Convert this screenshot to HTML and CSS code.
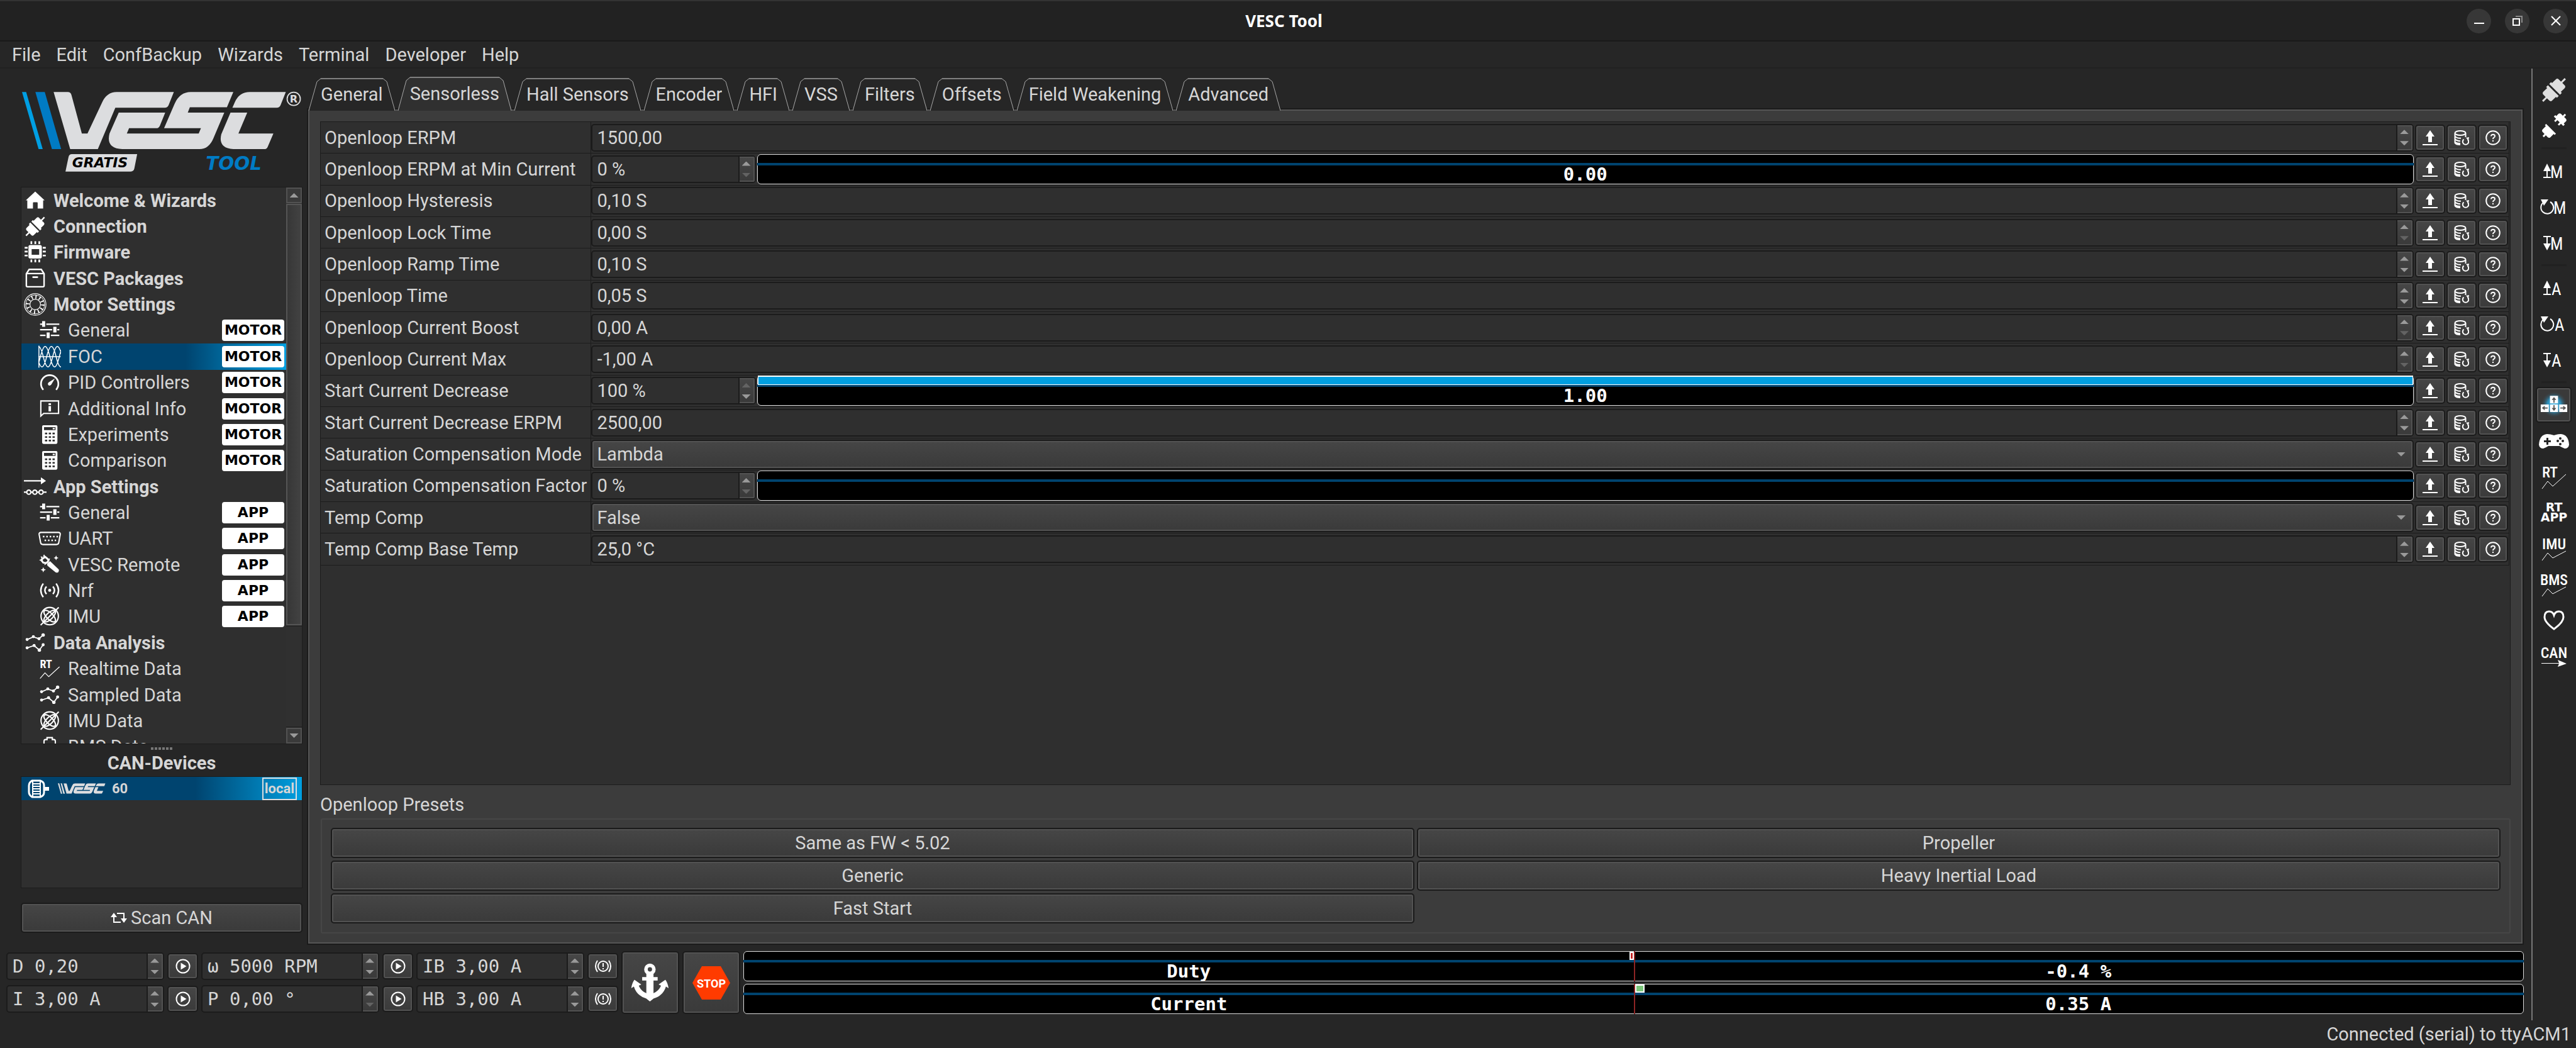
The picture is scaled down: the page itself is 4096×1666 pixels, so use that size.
FILE: index.html
```html
<!DOCTYPE html>
<html lang="en">
<head>
<meta charset="utf-8">
<title>VESC Tool</title>
<link rel="stylesheet" href="styles.css">
</head>
<body>
<svg class="defs" aria-hidden="true">
  <symbol id="i-home" viewBox="0 0 120 120"><path d="M60 12L110 58H102V102H73V72Q73 68 69 68H52Q48 68 48 72V102H18V58H10Z"/></symbol>
  <symbol id="i-plug" viewBox="0 0 120 120"><g id="half" transform="rotate(45 60 60)"><path d="M56-9h8v22h14q8 0 9 8v24h6v11H27V45h6V21q1-8 9-8h14z"/></g><use href="#half" transform="rotate(180 60 60)"/></symbol>
  <symbol id="i-unplug" viewBox="0 0 120 120"><g transform="rotate(45 60 60)"><path d="M56-10h8V2h10q8 0 9 7v14h6v9H75v12h-8V32H53v12h-8V32H31v-9h6V9q1-7 9-7h10z"/><path d="M30 78h60v8h-6v20q-1 8-9 8H64v12h-8v-12H45q-8 0-9-8V86h-6z"/></g></symbol>
  <symbol id="i-chip" viewBox="0 0 120 120"><path fill-rule="evenodd" d="M34 22H85Q95 22 95 32V83Q95 93 85 93H34Q24 93 24 83V32Q24 22 34 22ZM41 43V73H81V43Z"/><path d="M35 2h9v15h-9zM56 2h9v15h-9zM77 2h9v15h-9zM35 98h9v15h-9zM56 98h9v15h-9zM77 98h9v15h-9zM4 32h16v9H4zM4 52h16v9H4zM4 73h16v9H4zM100 32h16v9h-16zM100 52h16v9h-16zM100 73h16v9h-16z"/></symbol>
  <symbol id="i-box" viewBox="0 0 120 120"><path class="ln" stroke-width="8" d="M13 34L28 11H92L107 34V97Q107 103 101 103H19Q13 103 13 97ZM13 33H107"/><path class="ln" stroke-width="9" stroke-linecap="round" d="M49 52H71"/></symbol>
  <symbol id="i-motor" viewBox="0 0 120 120"><g class="ln" stroke-width="4"><circle cx="60" cy="60" r="57"/><circle cx="60" cy="60" r="50" stroke-width="3"/><circle cx="60" cy="60" r="28"/><circle cx="60" cy="60" r="40" stroke-width="20" stroke-dasharray="6 14.940"/></g></symbol>
  <symbol id="i-sliders" viewBox="0 0 120 120"><path d="M9 24h11V12h16v30H20V32H9zM42 24h69v8H42zM9 53h64v8H9zM79 42h17v30H79zM100 53h11v8h-11zM9 83h29v8H9zM44 72h16v30H44zM66 83h45v8H66z"/></symbol>
  <symbol id="i-foc" viewBox="0 0 120 120"><path class="ln" stroke-width="5" d="M3 2V118M0 60H118M-39 60c18 72 32 72 50 0c18-72 32-72 50 0c18 72 32 72 50 0c18-72 32-72 50 0M-6 60c18 72 32 72 50 0c18-72 32-72 50 0c18 72 32 72 50 0M-24 60c18-72 32-72 50 0c18 72 32 72 50 0c18-72 32-72 50 0"/></symbol>
  <symbol id="i-gauge" viewBox="0 0 120 120"><path class="ln" stroke-width="9" stroke-linecap="round" d="M24 96A46 46 0 1 1 96 96"/><path d="M88 38L68 72Q60 80 52 73Q48 66 54 60Z"/></symbol>
  <symbol id="i-info" viewBox="0 0 120 120"><path class="ln" stroke-width="7" d="M13 98V18H107V84H28Z"/><path d="M54 30h13v10H54zM54 45h13v28H54z"/></symbol>
  <symbol id="i-calc" viewBox="0 0 120 120"><path fill-rule="evenodd" d="M27 10H94Q101 10 101 17V102Q101 109 94 109H27Q20 109 20 102V17Q20 10 27 10ZM30 20V36H91V20ZM76 24H87V32H76ZM35 49v9h12v-9zM55 49v9h12v-9zM75 49v9h12v-9zM35 68v9h12v-9zM55 68v9h12v-9zM75 68v9h12v-9zM35 87v9h12v-9zM55 87v9h12v-9zM75 87v9h12v-9z"/></symbol>
  <symbol id="i-app" viewBox="0 0 120 120"><path d="M0 24H90V9L117 28L90 47V32H0z"/><g class="ln" stroke-width="7"><path d="M0 88H13M38 88H46M70 88H78M104 88H120"/><circle cx="26" cy="88" r="11"/><circle cx="58" cy="88" r="11"/><circle cx="91" cy="88" r="11"/></g></symbol>
  <symbol id="i-uart" viewBox="0 0 120 120"><path class="ln" stroke-width="7" d="M14 28H106Q117 28 116 38L108 82Q106 92 96 92H24Q14 92 12 82L4 38Q3 28 14 28Z"/><path class="ln" stroke-width="8" stroke-dasharray="8 10" d="M24 50H104M33 70H94"/></symbol>
  <symbol id="i-wand" viewBox="0 0 120 120"><path class="ln" stroke-width="10" d="M20 28L36 18L44 24L54 34L50 44L40 50L26 48L18 38Z"/><path d="M30 4l8 12H24zM4 34l14-6v14zM62 26l-12 2 8 10zM32 62l2-14 10 6zM12 14l12 4-8 8z"/><path d="M46 54L62 40L108 84Q112 92 106 98Q98 104 90 98L48 64zM94 10l4 9 9 4-9 4-4 9-4-9-9-4 9-4zM26 72l4 10 10 4-10 4-4 10-4-10-10-4 10-4z"/></symbol>
  <symbol id="i-nrf" viewBox="0 0 120 120"><circle cx="60" cy="58" r="8"/><path class="ln" stroke-width="8" d="M43 38Q26 58 43 78M77 38Q94 58 77 78M26 22Q0 58 26 94M94 22Q120 58 94 94"/></symbol>
  <symbol id="i-imu" viewBox="0 0 120 120"><g class="ln" stroke-width="7"><circle cx="60" cy="58" r="46"/><path d="M12 106L108 12"/><ellipse cx="60" cy="58" rx="40" ry="17" transform="rotate(45 60 58)"/><ellipse cx="60" cy="58" rx="40" ry="17" transform="rotate(-45 60 58)"/></g></symbol>
  <symbol id="i-data" viewBox="0 0 120 120"><path class="ln" stroke-width="6" d="M18 42L50 28L80 38L102 18M18 86L54 74L82 98L102 70"/><circle cx="17" cy="42" r="8"/><circle cx="50" cy="27" r="8"/><circle cx="80" cy="38" r="8"/><circle cx="102" cy="18" r="9"/><circle cx="17" cy="86" r="8"/><circle cx="54" cy="74" r="8"/><circle cx="82" cy="98" r="9"/><circle cx="102" cy="70" r="8"/></symbol>
  <symbol id="i-batt" viewBox="0 0 120 120"><path class="ln" stroke-width="7" d="M46 22V12H74V22H82Q90 22 90 32V112H30V32Q30 22 38 22Z"/></symbol>
  <symbol id="i-trend" viewBox="0 0 120 120"><path class="ln" stroke-width="4" d="M9 112L35 82L55 102L112 50"/></symbol>
  <symbol id="i-upload" viewBox="0 0 24 24"><path d="M12 0L19 10H15V19H9V10H5ZM0 22h24v2H0z"/></symbol>
  <symbol id="i-db" viewBox="0 0 24 24"><g class="ln" stroke-width="2"><ellipse cx="10" cy="4.500" rx="8.500" ry="3.500"/><path d="M1.500 5V20Q3 23 10 23M18.500 5V11M1.500 9.500Q4 13 11 12.800M1.500 14Q4 17 10 17.300M1.500 18.500Q4 21 10 21"/><path d="M15.500 14.500A4.700 4.700 0 1 0 21.500 14.500"/></g><path d="M19 12l5-1-1 5z"/></symbol>
  <symbol id="i-help" viewBox="0 0 24 24"><circle class="ln" cx="12" cy="12" r="10.800" stroke-width="2"/><path class="ln" stroke-width="2" d="M9 9.500Q9.200 6.800 12 6.800Q15 6.800 15 9.300Q15 11 13.200 11.900Q12 12.500 12 14.300"/><path d="M11 16h2v2h-2z"/></symbol>
  <symbol id="i-play" viewBox="0 0 24 24"><circle class="ln" cx="12" cy="12" r="10.500" stroke-width="2"/><path d="M8.500 6.500L17.500 12L8.500 17.500Z"/></symbol>
  <symbol id="i-brake" viewBox="0 0 28 24"><circle class="ln" cx="14" cy="12" r="8" stroke-width="2"/><path class="ln" stroke-width="2" d="M5 3Q-1 12 5 21M23 3Q29 12 23 21"/><path d="M13 7h2v6h-2zM13 15h2v2h-2z"/></symbol>
  <symbol id="t-left" viewBox="0 0 20 54" preserveAspectRatio="none"><path class="tab-fill" d="M0 54L14 5L20 0V54Z"/><path class="tab-line" d="M1 54L14 6L20 1"/></symbol>
  <symbol id="t-right" viewBox="0 0 20 54" preserveAspectRatio="none"><path class="tab-fill" d="M20 54L6 5L0 0V54Z"/><path class="tab-line" d="M19 54L6 6L0 1"/></symbol>
  <symbol id="i-vesc" viewBox="27 62 1484 310"><path d="M195 66H270Q286 66 290 82L345 286H375L452 122Q478 66 530 66H834L806 136Q800 149 786 149H523L430 369H283ZM541 175H788L760 244Q754 258 740 258H596L584 286H966L978 258H782L838 128Q866 66 924 66H1150L1116 147H919L908 175H1102L1044 312Q1020 369 970 369H560Q472 366 492 286ZM1145 149L1158 120Q1182 66 1238 66H1429L1401 136Q1395 149 1381 149ZM1135 175H1224L1177 286H1363L1333 356Q1328 369 1314 369H1150Q1068 364 1086 290Z"/></symbol>
</svg>

<header class="titlebar">
  <h1>VESC Tool</h1>
  <div class="winbtns">
    <button type="button" aria-label="Minimize"><svg width="18" height="18" viewBox="0 0 18 18"><path d="M1 12h16v2H1z"/></svg></button>
    <button type="button" aria-label="Restore"><svg width="18" height="18" viewBox="0 0 18 18"><path class="ln" stroke-width="2" d="M2 6h10v10H2z"/><path class="ln dim" stroke-width="2" d="M6 2h10v10"/></svg></button>
    <button type="button" aria-label="Close"><svg width="18" height="18" viewBox="0 0 18 18"><path class="ln" stroke-width="2" d="M2 2L16 16M16 2L2 16"/></svg></button>
  </div>
</header>
<nav class="menubar">
  <a href="#">File</a><a href="#">Edit</a><a href="#">ConfBackup</a><a href="#">Wizards</a><a href="#">Terminal</a><a href="#">Developer</a><a href="#">Help</a>
</nav>

<div class="workspace">
  <main class="main">
    <div class="upper">
      <aside class="sidebar">
        <svg class="logo" viewBox="27 62 1484 430" role="img" aria-label="VESC Tool">
          <path fill="#009fe3" d="M27 66H49L137 369H115Z"/>
          <path fill="#007bc4" d="M98 66H148L235 369H186Z"/>
          <use href="#i-vesc" x="27" y="62" width="1484" height="310" fill="#dcdddf"/>
          <circle cx="1471" cy="102" r="35" fill="none" stroke="#dcdddf" stroke-width="6"/>
          <text class="reg" x="1471" y="121" text-anchor="middle">R</text>
          <path fill="#dcdddf" d="M292 396H639L624 472Q621 488 605 488H258L274 412Q277 396 292 396Z"/>
          <text class="gratis" x="294" y="467">GRATIS</text>
          <text class="tool-word" x="1004" y="479">TOOL</text>
        </svg>
        <div class="tree">
          <ul>
            <li class="top"><svg><use href="#i-home"/></svg><span>Welcome &amp; Wizards</span></li>
            <li class="top"><svg><use href="#i-plug"/></svg><span>Connection</span></li>
            <li class="top"><svg><use href="#i-chip"/></svg><span>Firmware</span></li>
            <li class="top"><svg><use href="#i-box"/></svg><span>VESC Packages</span></li>
            <li class="top"><svg><use href="#i-motor"/></svg><span>Motor Settings</span></li>
            <li><svg><use href="#i-sliders"/></svg><span>General</span><b>MOTOR</b></li>
            <li class="sel"><svg><use href="#i-foc"/></svg><span>FOC</span><b>MOTOR</b></li>
            <li><svg><use href="#i-gauge"/></svg><span>PID Controllers</span><b>MOTOR</b></li>
            <li><svg><use href="#i-info"/></svg><span>Additional Info</span><b>MOTOR</b></li>
            <li><svg><use href="#i-calc"/></svg><span>Experiments</span><b>MOTOR</b></li>
            <li><svg><use href="#i-calc"/></svg><span>Comparison</span><b>MOTOR</b></li>
            <li class="top"><svg><use href="#i-app"/></svg><span>App Settings</span></li>
            <li><svg><use href="#i-sliders"/></svg><span>General</span><b>APP</b></li>
            <li><svg><use href="#i-uart"/></svg><span>UART</span><b>APP</b></li>
            <li><svg><use href="#i-wand"/></svg><span>VESC Remote</span><b>APP</b></li>
            <li><svg><use href="#i-nrf"/></svg><span>Nrf</span><b>APP</b></li>
            <li><svg><use href="#i-imu"/></svg><span>IMU</span><b>APP</b></li>
            <li class="top"><svg><use href="#i-data"/></svg><span>Data Analysis</span></li>
            <li><svg viewBox="0 0 120 120"><text class="lbl-rt" x="8" y="58">RT</text><use href="#i-trend"/></svg><span>Realtime Data</span></li>
            <li><svg><use href="#i-data"/></svg><span>Sampled Data</span></li>
            <li><svg><use href="#i-imu"/></svg><span>IMU Data</span></li>
            <li><svg><use href="#i-batt"/></svg><span>BMS Data</span></li>
          </ul>
          <div class="scroll"><button type="button" class="sbtn" aria-label="Scroll up"><i class="up"></i></button><div class="thumb"></div><div class="track"></div><button type="button" class="sbtn" aria-label="Scroll down"><i class="down"></i></button></div>
        </div>
        <div class="grip"></div>
        <h2>CAN-Devices</h2>
        <div class="canlist">
          <div class="candev">
            <svg class="mot" viewBox="0 0 36 30"><path class="ln" stroke-width="3" d="M7 2H20Q26 4 26 9V21Q26 26 20 28H7Q2 25 2 20V10Q2 5 7 2Z"/><path class="ln" stroke-width="2" d="M8 3V27M20 3V27M8 7H20M8 11H20M8 15H20M8 19H20M8 23H20"/><path d="M27 12h7v6h-7z"/></svg>
            <svg class="mini" viewBox="27 62 1484 310"><path d="M27 66H69L157 369H115ZM108 66H148L235 369H186Z"/><use href="#i-vesc" x="27" y="62" width="1484" height="310"/></svg>
            <span>60</span><em>local</em>
          </div>
        </div>
        <button type="button" class="btn scan"><svg width="26" height="22" viewBox="0 0 26 22"><path class="ln" stroke-width="2" d="M16 18H5V7M10 4H21V15"/><path d="M5 3l5 7H0zM21 19l5-7H16z"/></svg>Scan CAN</button>
      </aside>

      <section class="content">
        <div class="tabs" role="tablist">
          <button type="button" class="tab" role="tab"><svg><use href="#t-left"/></svg><span>General</span><svg><use href="#t-right"/></svg></button>
          <button type="button" class="tab on" role="tab" aria-selected="true"><svg><use href="#t-left"/></svg><span>Sensorless</span><svg><use href="#t-right"/></svg></button>
          <button type="button" class="tab" role="tab"><svg><use href="#t-left"/></svg><span>Hall Sensors</span><svg><use href="#t-right"/></svg></button>
          <button type="button" class="tab" role="tab"><svg><use href="#t-left"/></svg><span>Encoder</span><svg><use href="#t-right"/></svg></button>
          <button type="button" class="tab" role="tab"><svg><use href="#t-left"/></svg><span>HFI</span><svg><use href="#t-right"/></svg></button>
          <button type="button" class="tab" role="tab"><svg><use href="#t-left"/></svg><span>VSS</span><svg><use href="#t-right"/></svg></button>
          <button type="button" class="tab" role="tab"><svg><use href="#t-left"/></svg><span>Filters</span><svg><use href="#t-right"/></svg></button>
          <button type="button" class="tab" role="tab"><svg><use href="#t-left"/></svg><span>Offsets</span><svg><use href="#t-right"/></svg></button>
          <button type="button" class="tab" role="tab"><svg><use href="#t-left"/></svg><span>Field Weakening</span><svg><use href="#t-right"/></svg></button>
          <button type="button" class="tab" role="tab"><svg><use href="#t-left"/></svg><span>Advanced</span><svg><use href="#t-right"/></svg></button>
        </div>
        <div class="pane">
          <div class="frame">
            <table class="params">
              <tr><th scope="row"><label for="p1">Openloop ERPM</label></th><td><div class="field"><span class="spin"><input id="p1" value="1500,00"><span class="arrows"><i class="up"></i><i class="down"></i></span></span><button type="button" class="btn sq" aria-label="Read current"><svg><use href="#i-upload"/></svg></button><button type="button" class="btn sq" aria-label="Read default"><svg><use href="#i-db"/></svg></button><button type="button" class="btn sq" aria-label="Help"><svg><use href="#i-help"/></svg></button></div></td></tr>
              <tr><th scope="row"><label for="p2">Openloop ERPM at Min Current</label></th><td><div class="field"><span class="spin pct"><input id="p2" value="0 %"><span class="arrows"><i class="up"></i><i class="down off"></i></span></span><div class="meter"><span>0.00</span></div><button type="button" class="btn sq" aria-label="Read current"><svg><use href="#i-upload"/></svg></button><button type="button" class="btn sq" aria-label="Read default"><svg><use href="#i-db"/></svg></button><button type="button" class="btn sq" aria-label="Help"><svg><use href="#i-help"/></svg></button></div></td></tr>
              <tr><th scope="row"><label for="p3">Openloop Hysteresis</label></th><td><div class="field"><span class="spin"><input id="p3" value="0,10 S"><span class="arrows"><i class="up"></i><i class="down"></i></span></span><button type="button" class="btn sq" aria-label="Read current"><svg><use href="#i-upload"/></svg></button><button type="button" class="btn sq" aria-label="Read default"><svg><use href="#i-db"/></svg></button><button type="button" class="btn sq" aria-label="Help"><svg><use href="#i-help"/></svg></button></div></td></tr>
              <tr><th scope="row"><label for="p4">Openloop Lock Time</label></th><td><div class="field"><span class="spin"><input id="p4" value="0,00 S"><span class="arrows"><i class="up"></i><i class="down off"></i></span></span><button type="button" class="btn sq" aria-label="Read current"><svg><use href="#i-upload"/></svg></button><button type="button" class="btn sq" aria-label="Read default"><svg><use href="#i-db"/></svg></button><button type="button" class="btn sq" aria-label="Help"><svg><use href="#i-help"/></svg></button></div></td></tr>
              <tr><th scope="row"><label for="p5">Openloop Ramp Time</label></th><td><div class="field"><span class="spin"><input id="p5" value="0,10 S"><span class="arrows"><i class="up"></i><i class="down"></i></span></span><button type="button" class="btn sq" aria-label="Read current"><svg><use href="#i-upload"/></svg></button><button type="button" class="btn sq" aria-label="Read default"><svg><use href="#i-db"/></svg></button><button type="button" class="btn sq" aria-label="Help"><svg><use href="#i-help"/></svg></button></div></td></tr>
              <tr><th scope="row"><label for="p6">Openloop Time</label></th><td><div class="field"><span class="spin"><input id="p6" value="0,05 S"><span class="arrows"><i class="up"></i><i class="down"></i></span></span><button type="button" class="btn sq" aria-label="Read current"><svg><use href="#i-upload"/></svg></button><button type="button" class="btn sq" aria-label="Read default"><svg><use href="#i-db"/></svg></button><button type="button" class="btn sq" aria-label="Help"><svg><use href="#i-help"/></svg></button></div></td></tr>
              <tr><th scope="row"><label for="p7">Openloop Current Boost</label></th><td><div class="field"><span class="spin"><input id="p7" value="0,00 A"><span class="arrows"><i class="up"></i><i class="down off"></i></span></span><button type="button" class="btn sq" aria-label="Read current"><svg><use href="#i-upload"/></svg></button><button type="button" class="btn sq" aria-label="Read default"><svg><use href="#i-db"/></svg></button><button type="button" class="btn sq" aria-label="Help"><svg><use href="#i-help"/></svg></button></div></td></tr>
              <tr><th scope="row"><label for="p8">Openloop Current Max</label></th><td><div class="field"><span class="spin"><input id="p8" value="-1,00 A"><span class="arrows"><i class="up"></i><i class="down off"></i></span></span><button type="button" class="btn sq" aria-label="Read current"><svg><use href="#i-upload"/></svg></button><button type="button" class="btn sq" aria-label="Read default"><svg><use href="#i-db"/></svg></button><button type="button" class="btn sq" aria-label="Help"><svg><use href="#i-help"/></svg></button></div></td></tr>
              <tr><th scope="row"><label for="p9">Start Current Decrease</label></th><td><div class="field"><span class="spin pct"><input id="p9" value="100 %"><span class="arrows"><i class="up off"></i><i class="down"></i></span></span><div class="meter"><div class="fill" style="width:100%"></div><span>1.00</span></div><button type="button" class="btn sq" aria-label="Read current"><svg><use href="#i-upload"/></svg></button><button type="button" class="btn sq" aria-label="Read default"><svg><use href="#i-db"/></svg></button><button type="button" class="btn sq" aria-label="Help"><svg><use href="#i-help"/></svg></button></div></td></tr>
              <tr><th scope="row"><label for="p10">Start Current Decrease ERPM</label></th><td><div class="field"><span class="spin"><input id="p10" value="2500,00"><span class="arrows"><i class="up"></i><i class="down"></i></span></span><button type="button" class="btn sq" aria-label="Read current"><svg><use href="#i-upload"/></svg></button><button type="button" class="btn sq" aria-label="Read default"><svg><use href="#i-db"/></svg></button><button type="button" class="btn sq" aria-label="Help"><svg><use href="#i-help"/></svg></button></div></td></tr>
              <tr><th scope="row"><label for="p11">Saturation Compensation Mode</label></th><td><div class="field"><span class="combo"><select id="p11"><option>Lambda</option></select><i class="down"></i></span><button type="button" class="btn sq" aria-label="Read current"><svg><use href="#i-upload"/></svg></button><button type="button" class="btn sq" aria-label="Read default"><svg><use href="#i-db"/></svg></button><button type="button" class="btn sq" aria-label="Help"><svg><use href="#i-help"/></svg></button></div></td></tr>
              <tr><th scope="row"><label for="p12">Saturation Compensation Factor</label></th><td><div class="field"><span class="spin pct"><input id="p12" value="0 %"><span class="arrows"><i class="up"></i><i class="down off"></i></span></span><div class="meter"></div><button type="button" class="btn sq" aria-label="Read current"><svg><use href="#i-upload"/></svg></button><button type="button" class="btn sq" aria-label="Read default"><svg><use href="#i-db"/></svg></button><button type="button" class="btn sq" aria-label="Help"><svg><use href="#i-help"/></svg></button></div></td></tr>
              <tr><th scope="row"><label for="p13">Temp Comp</label></th><td><div class="field"><span class="combo"><select id="p13"><option>False</option></select><i class="down"></i></span><button type="button" class="btn sq" aria-label="Read current"><svg><use href="#i-upload"/></svg></button><button type="button" class="btn sq" aria-label="Read default"><svg><use href="#i-db"/></svg></button><button type="button" class="btn sq" aria-label="Help"><svg><use href="#i-help"/></svg></button></div></td></tr>
              <tr><th scope="row"><label for="p14">Temp Comp Base Temp</label></th><td><div class="field"><span class="spin"><input id="p14" value="25,0 °C"><span class="arrows"><i class="up"></i><i class="down"></i></span></span><button type="button" class="btn sq" aria-label="Read current"><svg><use href="#i-upload"/></svg></button><button type="button" class="btn sq" aria-label="Read default"><svg><use href="#i-db"/></svg></button><button type="button" class="btn sq" aria-label="Help"><svg><use href="#i-help"/></svg></button></div></td></tr>
            </table>
          </div>
          <h3>Openloop Presets</h3>
          <div class="presets">
            <button type="button" class="btn">Same as FW &lt; 5.02</button>
            <button type="button" class="btn">Propeller</button>
            <button type="button" class="btn">Generic</button>
            <button type="button" class="btn">Heavy Inertial Load</button>
            <button type="button" class="btn">Fast Start</button>
          </div>
        </div>
      </section>
    </div>

    <div class="controls">
      <span class="spin mono"><input aria-label="Duty" value="D 0,20"><span class="arrows"><i class="up"></i><i class="down"></i></span></span>
      <button type="button" class="btn sq" aria-label="Run duty"><svg><use href="#i-play"/></svg></button>
      <span class="spin mono"><input aria-label="Speed" value="ω 5000 RPM"><span class="arrows"><i class="up"></i><i class="down"></i></span></span>
      <button type="button" class="btn sq" aria-label="Run speed"><svg><use href="#i-play"/></svg></button>
      <span class="spin mono"><input aria-label="Brake current" value="IB 3,00 A"><span class="arrows"><i class="up"></i><i class="down"></i></span></span>
      <button type="button" class="btn sq brake" aria-label="Brake"><svg><use href="#i-brake"/></svg></button>
      <button type="button" class="btn big" aria-label="Full brake"><svg width="60" height="60" viewBox="0 0 200 200"><circle class="ln" cx="98" cy="30" r="21" stroke-width="19"/><path d="M79 46H117V160H79zM57 71h82v18H57z"/><path d="M16 85L52 110L39 117Q52 146 80 157H116Q144 146 157 117L144 110L180 85Q192 100 197 130L183 121Q168 170 118 184L98 200L78 184Q28 170 13 121L-1 130Q4 100 16 85Z"/></svg></button>
      <button type="button" class="btn big" aria-label="Stop"><svg width="60" height="53" viewBox="0 0 60 53"><path fill="#ff3b00" d="M15 0H45L60 26.500L45 53H15L0 26.500Z"/><text class="stop" x="30" y="34" text-anchor="middle">STOP</text></svg></button>
      <div class="meter live"><i class="zero"></i><i class="mark neg"></i><span>Duty</span><span>-0.4 %</span></div>
      <span class="spin mono"><input aria-label="Current" value="I 3,00 A"><span class="arrows"><i class="up"></i><i class="down"></i></span></span>
      <button type="button" class="btn sq" aria-label="Run current"><svg><use href="#i-play"/></svg></button>
      <span class="spin mono"><input aria-label="Position" value="P 0,00 °"><span class="arrows"><i class="up"></i><i class="down off"></i></span></span>
      <button type="button" class="btn sq" aria-label="Run position"><svg><use href="#i-play"/></svg></button>
      <span class="spin mono"><input aria-label="Handbrake current" value="HB 3,00 A"><span class="arrows"><i class="up"></i><i class="down"></i></span></span>
      <button type="button" class="btn sq brake" aria-label="Handbrake"><svg><use href="#i-brake"/></svg></button>
      <div class="meter live"><i class="zero"></i><i class="mark pos"></i><span>Current</span><span>0.35 A</span></div>
    </div>
  </main>

  <nav class="toolbar" aria-label="Tools">
    <button type="button" class="plug dimmed" aria-label="Reconnect"><svg><use href="#i-plug"/></svg></button>
    <button type="button" class="plug" aria-label="Disconnect"><svg><use href="#i-unplug"/></svg></button>
    <hr>
    <button type="button" aria-label="Read motor configuration"><svg viewBox="0 0 48 48"><path d="M13 12l6 12h-5v9h5v2H7v-2h5v-9H7z"/><text x="18" y="35">M</text></svg></button>
    <button type="button" aria-label="Read default motor configuration"><svg viewBox="0 0 48 48"><path class="ln" stroke-width="2" d="M18 16A10 10 0 1 1 7 17"/><path d="M3 12H15L8 22Z"/><text x="23" y="35">M</text></svg></button>
    <button type="button" aria-label="Write motor configuration"><svg viewBox="0 0 48 48"><path d="M13 36l6-11h-5v-10h5v-2H7v2h5v10H7z"/><text x="18" y="35">M</text></svg></button>
    <hr>
    <button type="button" aria-label="Read app configuration"><svg viewBox="0 0 48 48"><path d="M13 12l6 12h-5v9h5v2H7v-2h5v-9H7z"/><text x="20" y="35">A</text></svg></button>
    <button type="button" aria-label="Read default app configuration"><svg viewBox="0 0 48 48"><path class="ln" stroke-width="2" d="M18 16A10 10 0 1 1 7 17"/><path d="M3 12H15L8 22Z"/><text x="25" y="35">A</text></svg></button>
    <button type="button" aria-label="Write app configuration"><svg viewBox="0 0 48 48"><path d="M13 36l6-11h-5v-10h5v-2H7v2h5v10H7z"/><text x="20" y="35">A</text></svg></button>
    <hr>
    <button type="button" class="active" aria-label="Keyboard control"><svg viewBox="0 0 48 48"><defs><radialGradient id="glow"><stop offset="0" stop-color="#3fb5e6"/><stop offset=".5" stop-color="#2f8fba"/><stop offset="1" stop-color="#3a3a3a" stop-opacity="0"/></radialGradient></defs><ellipse cx="24" cy="23" rx="23" ry="23" fill="url(#glow)"/><path d="M17 8h14v13H17zM1 23h14v13H1zM17 23h14v13H17zM33 23h14v13H33z"/><path fill="#555" d="M24 10l4 5h-3v5h-2v-5h-3zM24 34l4-5h-3v-5h-2v5h-3zM3 29l5-4v3h5v2H8v3zM45 29l-5-4v3h-5v2h5v3z"/></svg></button>
    <button type="button" aria-label="Gamepad"><svg viewBox="0 0 48 48"><path fill-rule="evenodd" d="M13 13Q18 13 24 15Q30 13 35 13Q47 14 48 30Q47 36 41 36Q36 34 33 32H15Q12 34 7 36Q1 36 0 30Q1 14 13 13ZM12 19v4H8v3h4v4h3v-4h4v-3h-4v-4z"/><g fill="#262626"><circle cx="34" cy="20" r="2"/><circle cx="34" cy="29" r="2"/><circle cx="30" cy="24" r="2"/><circle cx="38" cy="24" r="2"/></g></svg></button>
    <button type="button" aria-label="Stream realtime data"><svg viewBox="0 0 48 48"><text class="cap" x="5" y="25">RT</text><path class="ln" stroke-width="1" d="M5 43L14 31L22 39L43 20"/></svg></button>
    <button type="button" aria-label="Stream realtime app data"><svg viewBox="0 0 48 48"><text class="wide" x="24" y="22" text-anchor="middle">RT</text><text class="wide" x="24" y="38" text-anchor="middle">APP</text></svg></button>
    <button type="button" aria-label="Stream IMU data"><svg viewBox="0 0 48 48"><text class="cap" x="24" y="25" text-anchor="middle">IMU</text><path class="ln" stroke-width="1" d="M5 43L14 31L22 39L43 28"/></svg></button>
    <button type="button" aria-label="Stream BMS data"><svg viewBox="0 0 48 48"><text class="cap" x="24" y="25" text-anchor="middle">BMS</text><path class="ln" stroke-width="1" d="M5 43L14 31L22 39L43 28"/></svg></button>
    <button type="button" aria-label="Send alive"><svg viewBox="0 0 48 48"><path class="ln" stroke-width="3" d="M24 38Q9 27 9 19Q9 10 16 10Q22 10 24 16Q26 10 32 10Q39 10 39 19Q39 27 24 38Z"/></svg></button>
    <button type="button" aria-label="CAN forward"><svg viewBox="0 0 48 48"><text class="cap" x="24" y="27" text-anchor="middle">CAN</text><path d="M4 35h28l-2-5 14 6-14 5 2-5H4z"/></svg></button>
  </nav>
</div>
<footer class="status">Connected (serial) to ttyACM1</footer>
</body>
</html>
```
FILE: styles.css
```css
* { box-sizing: border-box; }
html, body { height: 100%; }
body {
  margin: 0;
  display: flex;
  flex-direction: column;
  min-height: 100vh;
  overflow: hidden;
  background: #262626;
  color: #d6d6d6;
  font: 29px/34px Roboto, "Liberation Sans", sans-serif;
}
button, input, select { font: inherit; color: inherit; margin: 0; }
button { cursor: pointer; }
svg { fill: #fff; flex: none; overflow: visible; }
.defs { position: absolute; width: 0; height: 0; }
.ln { fill: none; stroke: #fff; }
.dim { stroke: #8a8a8a; }
h1, h2, h3 { margin: 0; font-size: 29px; }

/* triangles used by spin boxes, combos and scroll bars */
.up, .down {
  display: block;
  width: 14px;
  height: 7px;
  background: #9a9a9a;
}
.up { clip-path: polygon(50% 0, 100% 100%, 0 100%); }
.down { clip-path: polygon(0 0, 100% 0, 50% 100%); }
.off { background: #636363; }

/* title bar and menu */
.titlebar {
  display: grid;
  grid-template-columns: 1fr auto 1fr;
  align-items: center;
  height: 66px;
  padding-right: 13px;
  background: #222;
  border-top: 2px solid #333;
  border-bottom: 2px solid #191919;
}
.titlebar h1 { grid-column: 2; font: bold 26px/34px "Noto Sans", sans-serif; color: #fff; }
.winbtns { display: flex; justify-content: flex-end; gap: 22px; }
.winbtns button {
  display: grid;
  place-items: center;
  width: 39px;
  height: 39px;
  padding: 0;
  border: 0;
  border-radius: 50%;
  background: #373737;
}
.menubar {
  display: flex;
  align-items: center;
  gap: 25px;
  height: 43px;
  padding: 0 19px;
  border-bottom: 2px solid #212121;
}
.menubar a { color: inherit; text-decoration: none; }

.workspace { flex: 1; display: flex; min-height: 0; }
.main { flex: 1; min-width: 0; display: flex; flex-direction: column; gap: 10px; padding: 0 12px 10px 0; }
.upper { flex: 1; min-height: 0; display: flex; gap: 9px; padding-left: 33px; }

/* sidebar */
.sidebar { width: 448px; flex: none; display: flex; flex-direction: column; padding: 36px 0 19px; }
.logo { display: block; width: 444px; height: 129px; margin: 0 0 23px 2px; }
.reg { font: bold 54px "DejaVu Sans", sans-serif; fill: #dcdddf; }
.gratis { font: italic bold 73px "DejaVu Sans", sans-serif; fill: #000; }
.tool-word { font: italic bold 98px "DejaVu Sans", sans-serif; fill: #007bc4; }
.tree {
  flex: 1;
  min-height: 0;
  display: flex;
  overflow: hidden;
  background: #2f2f2f;
  border: 1px solid #1c1c1c;
}
.tree ul {
  flex: 1;
  display: grid;
  grid-auto-rows: 1fr;
  height: 910px;
  margin: 0;
  padding: 0;
  list-style: none;
}
.tree li { display: flex; align-items: center; padding: 0 3px 0 27px; }
.tree li.top { padding-left: 4px; font-weight: 700; }
.tree li svg { width: 36px; height: 36px; margin-right: 11px; }
.tree li b {
  width: 99px;
  height: 34px;
  margin-left: auto;
  border-radius: 4px;
  background: #fff;
  color: #000;
  text-align: center;
  font: bold 22px/34px "DejaVu Sans", sans-serif;
}
.tree li.sel { background: linear-gradient(90deg, #00446f 62%, #009fe0); }
.lbl-rt { font: bold 60px "Roboto Condensed", Roboto, sans-serif; }
.scroll { width: 25px; display: flex; flex-direction: column; background: #2f2f2f; }
.sbtn {
  display: grid;
  place-items: center;
  height: 25px;
  padding: 0;
  background: #3a3a3a;
  border: 2px solid #525252;
}
.thumb {
  flex: 672;
  margin-top: 1px;
  background: linear-gradient(90deg, #373737, #424242);
  border: 2px solid #555;
}
.track { flex: 160; margin: 1px 0; border: 1px solid #212121; border-width: 1px 0; background: #303030; }
.grip {
  align-self: center;
  width: 34px;
  height: 4px;
  margin-top: 5px;
  background: repeating-linear-gradient(90deg, #777 0 4px, transparent 4px 6px);
}
.sidebar h2 { text-align: center; line-height: 42px; }
.canlist { height: 178px; background: #2f2f2f; border: 1px solid #1c1c1c; }
.candev {
  display: flex;
  align-items: center;
  height: 37px;
  padding: 0 8px 0 10px;
  font-size: 22px;
  font-weight: 700;
  background: linear-gradient(90deg, #00446f 62%, #009fe0);
}
.mot { width: 36px; height: 30px; margin-right: 12px; }
.mini { width: 80px; height: 17px; margin-right: 6px; fill: #dcdddf; }
.candev em { margin-left: auto; padding: 0 2px; border: 2px solid #dcdddf; font-style: normal; line-height: 32px; }

/* generic raised button */
.btn {
  display: flex;
  align-items: center;
  justify-content: center;
  height: 48px;
  padding: 0;
  border: 2px solid #1b1b1b;
  border-radius: 5px;
  background: linear-gradient(#464646, #3a3a3a);
  box-shadow: inset 0 0 0 2px #525252;
}
.btn.sq { width: 48px; height: 42px; }
.btn.sq svg { width: 24px; height: 24px; }
.btn.brake svg { width: 28px; }
.btn.big { grid-row: span 2; height: auto; }
.scan { gap: 6px; margin-top: 23px; }
.stop { font: bold 18px Roboto, sans-serif; }

/* tabs */
.content { flex: 1; min-width: 0; display: flex; flex-direction: column; padding: 13px 0 0; }
.tabs { display: flex; align-items: flex-end; gap: 3px; height: 54px; margin-bottom: -2px; position: relative; }
.tab { display: flex; height: 52px; padding: 0; border: 0; background: none; --fill: #262626; }
.tab.on { height: 54px; --fill: #303030; }
.tab svg { width: 20px; height: 100%; }
.tab span {
  display: flex;
  align-items: center;
  height: 100%;
  padding-bottom: 2px;
  border-top: 2px solid #808080;
  background: var(--fill);
}
.tab-fill { fill: var(--fill); }
.tab-line { fill: none; stroke: #a8a8a8; stroke-width: 1; vector-effect: non-scaling-stroke; }
.pane {
  flex: 1;
  display: flex;
  flex-direction: column;
  margin: 0 2px 2px 0;
  padding: 17px 17px 14px;
  background: #3c3c3c;
  border: 2px solid #555;
  box-shadow: 0 0 0 2px #1b1b1b;
}
.frame { flex: 1; background: #2f2f2f; border: 1px solid #1c1c1c; }
.pane h3 { padding: 14px 0 5px; font-weight: 400; }
.presets {
  display: grid;
  grid-template-columns: 1fr 1fr;
  gap: 4px;
  margin-left: 1px;
  padding: 13px 14px 14px;
  border: 2px solid #464646;
  border-radius: 3px;
}

/* parameter table */
.params { width: calc(100% - 1px); height: 705px; border-collapse: collapse; }
.params th, .params td { padding: 0; border: 1px solid #1c1c1c; border-top: 0; }
.params th { width: 429px; padding-left: 6px; border-left: 0; font-weight: 400; text-align: left; white-space: nowrap; }
.field { display: flex; align-items: center; gap: 2px; padding-right: 1px; height: 48px; }
.spin {
  flex: 1;
  display: flex;
  height: 44px;
  min-width: 0;
  border: 2px solid #1b1b1b;
  border-radius: 5px;
  background: #2f2f2f;
  overflow: hidden;
}
.spin.pct { flex: none; width: 262px; }
.spin input { flex: 1; min-width: 0; width: 0; padding: 0 8px; border: 0; background: none; outline: 0; }
.arrows {
  width: 24px;
  display: flex;
  flex-direction: column;
  align-items: center;
  justify-content: center;
  gap: 11px;
  border: 2px solid #525252;
  border-left: 0;
  background: linear-gradient(#464646, #3a3a3a);
  box-shadow: -2px 0 0 #1b1b1b;
}
.combo { flex: 1; display: grid; align-items: center; }
.combo select {
  grid-area: 1 / 1;
  appearance: none;
  height: 47px;
  padding: 0 8px;
  border: 2px solid #1b1b1b;
  border-radius: 5px;
  background: linear-gradient(#464646, #3a3a3a);
  box-shadow: inset 0 0 0 2px #525252;
}
.combo .down { grid-area: 1 / 1; justify-self: end; margin-right: 13px; pointer-events: none; }

/* value meters */
.meter {
  flex: 1;
  position: relative;
  display: flex;
  height: 48px;
  padding-top: 16px;
  background: #000;
  border: 1px solid #ddd;
  border-radius: 6px;
  color: #fff;
  font: bold 29px/30px "DejaVu Sans Mono", monospace;
}
.meter::before { content: ""; position: absolute; top: 13px; left: -1px; right: -1px; height: 4px; background: #00446f; }
.meter span { flex: 1; text-align: center; z-index: 1; }
.fill { position: absolute; top: -1px; left: 0; height: 15px; background: #009fe0; border: 1px solid #fff; border-top-width: 2px; }
.zero { position: absolute; top: -1px; bottom: -1px; left: 50%; width: 2px; background: #8d2424; z-index: 0; }
.mark { position: absolute; top: 0; height: 13px; border: 2px solid #fff; }
.neg { right: 50%; width: 7px; background: #c62828; }
.pos { left: 50%; width: 15px; margin-left: 2px; background: #7bc77b; }

/* bottom motor controls */
.controls {
  display: grid;
  grid-template-columns: 251px 49px 283px 49px 267px 49px 92px 92px 1fr;
  grid-template-rows: 48px 48px;
  gap: 4px 5px;
  align-items: center;
  padding-left: 10px;
}
.controls .btn.sq { width: 49px; }
.controls .big { align-self: stretch; }
.mono { font-family: "DejaVu Sans Mono", monospace; }

/* right tool bar */
.toolbar {
  flex: none;
  display: flex;
  flex-direction: column;
  align-items: center;
  width: 71px;
  padding: 5px 2px 0 0;
  border-left: 2px solid #777;
}
.toolbar button {
  flex: none;
  display: grid;
  place-items: center;
  width: 57px;
  height: 57px;
  padding: 0;
  border: 0;
  background: none;
}
.toolbar svg { width: 48px; height: 48px; }
.toolbar .dimmed svg { fill: #dedede; }
.toolbar .plug svg { width: 44px; height: 44px; }
.toolbar hr { width: 40px; height: 3px; margin: 6px 0; border: 0; background: #212121; }
.toolbar .active {
  border: 2px solid #1b1b1b;
  border-radius: 5px;
  background: #3a3a3a;
  box-shadow: inset 0 0 0 2px #525252;
}
.toolbar .active svg { width: 44px; height: 44px; }
.toolbar text { font: 27px "Roboto Condensed", Roboto, sans-serif; }
.toolbar .cap { font-size: 24px; font-weight: 500; }
.toolbar .wide { font: bold 19px "DejaVu Sans", sans-serif; }

.status { height: 44px; padding: 5px 8px 5px; text-align: right; }
```
